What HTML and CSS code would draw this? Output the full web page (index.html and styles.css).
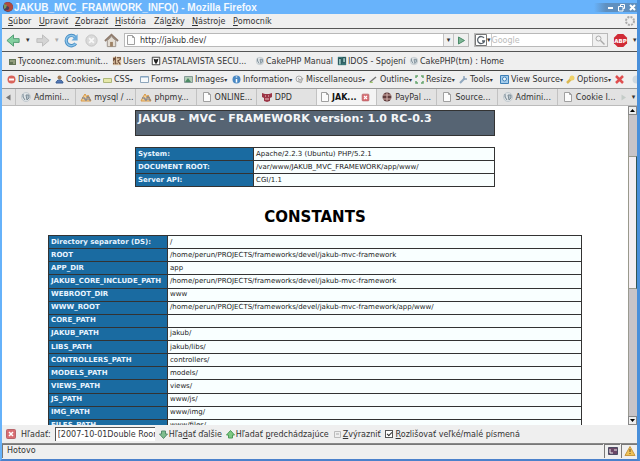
FILE: index.html
```
<!DOCTYPE html>
<html lang="sk">
<head>
    <meta charset="UTF-8">
    <meta name="viewport" content="width=device-width, initial-scale=1.0">
    <title>JAKUB_MVC_FRAMWORK_INFO() - Mozilla Firefox</title>
    <link rel="stylesheet" href="styles.css">
</head>
<body>
    <!-- shared icons -->
    <svg class="sprite" aria-hidden="true">
        <symbol id="page" viewBox="0 0 12 12"><path d="M2.5 1.5h5l2 2v7h-7z" fill="#fcfcfc" stroke="#a0a0a0"/><path d="M7.500 1.500v2h2" fill="none" stroke="#a0a0a0"/></symbol>
        <symbol id="cake" viewBox="0 0 12 12"><circle cx="6" cy="6" r="4.500" fill="#dfe4e7" stroke="#c3cacf"/><path d="M3 3v3l2 3M6 4h3v3l-2 2z" fill="#b5c3cc" stroke="#7b8a94"/></symbol>
        <symbol id="mysql" viewBox="0 0 12 12"><path d="M1 10l2-4 2-3 2 3 1-2 3 6z" fill="#f3cf91" stroke="#d99a48"/><path d="M2 7h3v2h2V6h2v3h2" fill="none" stroke="#6d7792"/></symbol>
        <symbol id="close" viewBox="0 0 12 12"><rect x="1.500" y="1.500" width="9" height="9" rx="1" fill="#d96d72" stroke="#b8646a"/><path d="M4 4l4 4M8 4l-4 4" stroke="#fff" stroke-width="1.500"/></symbol>
    </svg>

    <div class="window">
        <header class="titlebar">
            <svg class="icon" viewBox="0 0 12 12"><circle cx="6" cy="6" r="5" fill="#4d3f58"/><path d="M2 2c4-2 9 0 9 4s-5 6-8 3c3 1 5-1 4-3L5 5z" fill="#b34a3f"/><path d="M2 3l3 1-1 3-2 1z" fill="#7a9a5c"/></svg>
            <h1 class="title">JAKUB_MVC_FRAMWORK_INFO() - Mozilla Firefox</h1>
            <div class="window-buttons">
                <button class="btn" aria-label="Minimalizovať"><svg class="icon-small" viewBox="0 0 9 9"><path d="M2 5h5" stroke="#fff" stroke-width="2"/></svg></button>
                <button class="btn" aria-label="Obnoviť"><svg class="icon-small" viewBox="0 0 9 9"><path d="M3.500 3V1.500h4v4H6M1.500 3.500H6V8H1.500z" fill="none" stroke="#fff"/></svg></button>
                <button class="btn" aria-label="Zavrieť"><svg class="icon-small" viewBox="0 0 9 9"><path d="M2 2l5 5M7 2L2 7" stroke="#fff" stroke-width="2"/></svg></button>
            </div>
        </header>

        <nav class="menubar">
            <button class="btn"><u>S</u>úbor</button>
            <button class="btn"><u>U</u>praviť</button>
            <button class="btn"><u>Z</u>obraziť</button>
            <button class="btn"><u>H</u>istória</button>
            <button class="btn">Zál<u>o</u>žky</button>
            <button class="btn"><u>N</u>ástroje</button>
            <button class="btn"><u>P</u>omocník</button>
            <svg class="icon throbber" viewBox="0 0 12 12"><circle cx="6" cy="6" r="4" fill="none" stroke="#aaa" stroke-width="2" stroke-dasharray="2 1.140"/></svg>
        </nav>

        <div class="navbar">
            <button class="btn" aria-label="Späť"><svg class="icon-large" viewBox="0 0 16 16"><path d="M1 8l7-6v4h6v4H8v4z" fill="#83cfa0" stroke="#4d9a70"/></svg></button>
            <button class="btn arrow" aria-label="História späť">▾</button>
            <button class="btn" aria-label="Dopredu"><svg class="icon-large" viewBox="0 0 16 16"><path d="M15 8L8 2v4H2v4h6v4z" fill="#d4d4d4" stroke="#bcbcbc"/></svg></button>
            <button class="btn arrow faded" aria-label="História dopredu">▾</button>
            <button class="btn" aria-label="Obnoviť stránku"><svg class="icon-large" viewBox="0 0 16 16"><path d="M12.500 11a5.500 5.500 0 1 1-.5-6.500" fill="none" stroke="#4a8fc4" stroke-width="3.500"/><path d="M12.500 11a5.500 5.500 0 1 1-.5-6.500" fill="none" stroke="#8cc4ea" stroke-width="1.500"/><path d="M14.500 1v7H8z" fill="#68aadb"/></svg></button>
            <button class="btn" aria-label="Zastaviť"><svg class="icon-large" viewBox="0 0 16 16"><circle cx="8" cy="8" r="6" fill="#dadada" stroke="#c2c2c2"/><path d="M5.500 5.500l5 5M10.500 5.500l-5 5" stroke="#f8f8f8" stroke-width="2"/></svg></button>
            <button class="btn" aria-label="Domov"><svg class="icon-large" viewBox="0 0 16 16"><path d="M3.500 8v6.500h9V8L8 4z" fill="#e4ddd3" stroke="#999087"/><path d="M1 8.500L8 2l7 6.500" fill="none" stroke="#8f7b6c" stroke-width="2"/><path d="M6.500 9.500h3v5h-3z" fill="#9d8265"/></svg></button>
            <div class="address">
                <svg class="icon"><use href="#page"/></svg>
                <input class="url" type="text" value="http://jakub.dev/" aria-label="Adresa">
                <button class="btn field-btn" aria-label="Zoznam adries">▾</button>
                <button class="btn field-btn go" aria-label="Prejsť"><svg class="icon-small" viewBox="0 0 9 9"><path d="M1.500 1l6 3.500-6 3.500z" fill="#7eb696" stroke="#4b8b69"/></svg></button>
            </div>
            <div class="search">
                <button class="btn engine" aria-label="Vyhľadávač"><svg class="icon" viewBox="0 0 12 12"><path d="M.5.500h11v11H.5z" fill="#fff" stroke="#777"/><path d="M9 4a3.500 3.500 0 1 0 .5 3H7" fill="none" stroke="#56606a" stroke-width="1.300"/></svg>▾</button>
                <input class="query" type="text" placeholder="Google" aria-label="Hľadať na webe">
                <button class="btn field-btn lens" aria-label="Hľadať"><svg class="icon" viewBox="0 0 12 12"><circle cx="4.500" cy="4.500" r="2.500" fill="#f4f4f4" stroke="#aaa"/><path d="M6.500 6.500l4 4" stroke="#aaa" stroke-width="1.500"/></svg></button>
            </div>
            <button class="btn" aria-label="Adblock Plus"><svg class="icon-large" viewBox="0 0 16 16"><path d="M5 1h6l4 4v6l-4 4H5l-4-4V5z" fill="#d02b36"/><text x="8" y="11" class="abp">ABP</text></svg></button>
            <button class="btn arrow" aria-label="Možnosti Adblock">▾</button>
        </div>

        <nav class="bookmarks">
            <a href="#"><svg class="icon-small" viewBox="0 0 9 9"><path d="M1 2h7v6H1z" fill="#647558"/><path d="M2 4h3M6 3v4" stroke="#c1caa6"/></svg>Tycoonez.com:munit...</a>
            <a href="#"><svg class="icon" viewBox="0 0 12 12"><path d="M1 1h10v10H1z" fill="#dfc8a8"/><path d="M2 2v3l2-3v8M6 2h4v2L7 6l3 4M2 8v2M6 8v2" fill="none" stroke="#674431" stroke-width="1.300"/></svg>Users</a>
            <a href="#"><svg class="icon" viewBox="0 0 12 12"><path d="M1.500 1.500h9v9h-9z" fill="#fff" stroke="#222"/><path d="M3 3l2 1h2l2-1-1 4-2 3-2-3z" fill="#222"/></svg>ASTALAVISTA SECU...</a>
            <a href="#"><svg class="icon"><use href="#cake"/></svg>CakePHP Manual</a>
            <a href="#"><svg class="icon" viewBox="0 0 12 12"><path d="M1 1h10v10H1z" fill="#3b7777"/><path d="M2 10V3h3v7M7 8V2h3v6z" fill="#a9d6cf" stroke="#173e47"/></svg>IDOS - Spojení</a>
            <a href="#"><svg class="icon"><use href="#cake"/></svg>CakePHP(tm) : Home</a>
        </nav>

        <div class="devbar">
            <button class="btn"><svg class="icon-small" viewBox="0 0 9 9"><circle cx="4.500" cy="4.500" r="4" fill="#d9645b"/><path d="M2 4.500h5" stroke="#fff" stroke-width="2"/></svg>Disable<i>▾</i></button>
            <button class="btn"><svg class="icon-small" viewBox="0 0 9 9"><circle cx="4.500" cy="2.500" r="2" fill="#a47e5a"/><path d="M1 8c0-4 7-4 7 0z" fill="#5379b8" stroke="#365b91"/></svg>Cookies<i>▾</i></button>
            <button class="btn"><svg class="icon-small" viewBox="0 0 9 9"><path d="M.5 3.500h8v4h-8z" fill="#e6e8a8" stroke="#aeb87b"/></svg>CSS<i>▾</i></button>
            <button class="btn"><svg class="icon-small" viewBox="0 0 9 9"><path d="M.5 1.500h8v6h-8z" fill="#f6f9fb" stroke="#8da5bb"/><path d="M1 2h7" stroke="#7da2c5"/></svg>Forms<i>▾</i></button>
            <button class="btn"><svg class="icon-small" viewBox="0 0 9 9"><path d="M.5 1.500h8v6h-8z" fill="#b5ceb8" stroke="#859a97"/><path d="M1 7l3-4 3 4z" fill="#4b8a65"/></svg>Images<i>▾</i></button>
            <button class="btn"><svg class="icon-small" viewBox="0 0 9 9"><circle cx="4.500" cy="4.500" r="4" fill="#4a88c3"/><path d="M4.500 1.500v1M4.500 4v3.500" stroke="#fff" stroke-width="1.500"/></svg>Information<i>▾</i></button>
            <button class="btn"><svg class="icon-small" viewBox="0 0 9 9"><circle cx="4" cy="4" r="3" fill="#eee" stroke="#aaa"/><path d="M3 3l2 2 3-2-2 5-3-2" fill="#ccc" stroke="#aaa"/></svg>Miscellaneous<i>▾</i></button>
            <button class="btn"><svg class="icon-small" viewBox="0 0 9 9"><path d="M1 7l6-5" stroke="#777" stroke-width="1.500"/><path d="M0 8h4L3 6z" fill="#9bc26c"/></svg>Outline<i>▾</i></button>
            <button class="btn"><svg class="icon-small" viewBox="0 0 9 9"><path d="M1 3V1h2M6 1h2v2M1 6v2h2M6 8h2V6" fill="none" stroke="#65a56e" stroke-width="1.500"/></svg>Resize<i>▾</i></button>
            <button class="btn"><svg class="icon-small" viewBox="0 0 9 9"><path d="M1 8l5-5" stroke="#91a8bf" stroke-width="2"/><path d="M5 1v3h3" fill="none" stroke="#91a8bf" stroke-width="1.500"/></svg>Tools<i>▾</i></button>
            <button class="btn"><svg class="icon-small" viewBox="0 0 9 9"><path d="M.5.500h8v8h-8z" fill="#a4cceb" stroke="#3e7fb7"/><circle cx="4.500" cy="4" r="2" fill="#eef8ff" stroke="#3e7fb7"/></svg>View Source<i>▾</i></button>
            <button class="btn"><svg class="icon-small" viewBox="0 0 9 9"><path d="M1 8l5-5" stroke="#dbb851" stroke-width="2.500"/><circle cx="6" cy="3" r="2.500" fill="#f0d269"/></svg>Options<i>▾</i></button>
            <button class="btn" aria-label="Chyby"><svg class="icon-small" viewBox="0 0 9 9"><path d="M1 1l7 7M8 1L1 8" stroke="#df4f50" stroke-width="2.500"/></svg></button>
            <button class="btn" aria-label="Stav"><svg class="icon-small" viewBox="0 0 9 9"><circle cx="4.500" cy="4.500" r="4" fill="#cfd8df"/></svg></button>
        </div>

        <div class="tabbar">
            <button class="btn arrow" aria-label="Posunúť doľava"><svg class="icon-small" viewBox="0 0 9 9"><path d="M6.500 1.500L2 4.500l4.500 3z" fill="#777"/></svg></button>
            <div class="tabs">
                <button class="btn tab"><svg class="icon"><use href="#cake"/></svg>Admini...</button>
                <button class="btn tab"><svg class="icon"><use href="#mysql"/></svg>mysql / ...</button>
                <button class="btn tab"><svg class="icon"><use href="#mysql"/></svg>phpmy...</button>
                <button class="btn tab"><svg class="icon"><use href="#page"/></svg>ONLINE...</button>
                <button class="btn tab"><svg class="icon" viewBox="0 0 12 12"><path d="M1 2l3 1h4l3-1v4L9 7v3L6 11 3 10V7L1 6z" fill="#9b3546"/><path d="M4 5h1M7 5h1M4 8h4" stroke="#f1c6c8"/></svg>DPD</button>
                <button class="btn tab active"><svg class="icon"><use href="#page"/></svg>JAK...<svg class="icon-small tab-close"><use href="#close"/></svg></button>
                <button class="btn tab"><svg class="icon" viewBox="0 0 12 12"><circle cx="6" cy="6" r="4.500" fill="#603c3c"/><path d="M2 4h8M2 8h8M6 2v8" stroke="#d6b3ae"/></svg>PayPal ...</button>
                <button class="btn tab"><svg class="icon"><use href="#page"/></svg>Source...</button>
                <button class="btn tab"><svg class="icon"><use href="#cake"/></svg>Admini...</button>
                <button class="btn tab"><svg class="icon"><use href="#page"/></svg>Cookie I...</button>
            </div>
            <button class="btn arrow" aria-label="Posunúť doprava"><svg class="icon-small" viewBox="0 0 9 9"><path d="M2.500 1.500L7 4.500l-4.500 3z" fill="#c4ccc8"/></svg></button>
            <button class="btn arrow" aria-label="Zoznam kariet">▾</button>
        </div>

        <div class="viewport">
            <main class="page">
                <h2 class="version">JAKUB - MVC - FRAMEWORK version: 1.0 RC-0.3</h2>
                <table class="info system">
                    <tr><th>System:</th><td>Apache/2.2.3 (Ubuntu) PHP/5.2.1</td></tr>
                    <tr><th>DOCUMENT ROOT:</th><td>/var/www/JAKUB_MVC_FRAMEWORK/app/www/</td></tr>
                    <tr><th>Server API:</th><td>CGI/1.1</td></tr>
                </table>
                <h2 class="heading">CONSTANTS</h2>
                <table class="info constants">
                    <tr><th>Directory separator (DS):</th><td>/</td></tr>
                    <tr><th>ROOT</th><td>/home/perun/PROJECTS/frameworks/devel/jakub-mvc-framework</td></tr>
                    <tr><th>APP_DIR</th><td>app</td></tr>
                    <tr><th>JAKUB_CORE_INCLUDE_PATH</th><td>/home/perun/PROJECTS/frameworks/devel/jakub-mvc-framework</td></tr>
                    <tr><th>WEBROOT_DIR</th><td>www</td></tr>
                    <tr><th>WWW_ROOT</th><td>/home/perun/PROJECTS/frameworks/devel/jakub-mvc-framework/app/www/</td></tr>
                    <tr><th>CORE_PATH</th><td></td></tr>
                    <tr><th>JAKUB_PATH</th><td>jakub/</td></tr>
                    <tr><th>LIBS_PATH</th><td>jakub/libs/</td></tr>
                    <tr><th>CONTROLLERS_PATH</th><td>controllers/</td></tr>
                    <tr><th>MODELS_PATH</th><td>models/</td></tr>
                    <tr><th>VIEWS_PATH</th><td>views/</td></tr>
                    <tr><th>JS_PATH</th><td>www/js/</td></tr>
                    <tr><th>IMG_PATH</th><td>www/img/</td></tr>
                    <tr><th>FILES_PATH</th><td>www/files/</td></tr>
                </table>
            </main>
            <div class="scrollbar">
                <button class="btn scroll-btn" aria-label="Hore"><svg viewBox="0 0 5 5"><path d="M0 4l2.500-3L5 4z"/></svg></button>
                <div class="track before"></div>
                <div class="thumb"></div>
                <div class="track"></div>
                <button class="btn scroll-btn" aria-label="Dole"><svg viewBox="0 0 5 5"><path d="M0 1l2.500 3L5 1z"/></svg></button>
            </div>
        </div>

        <div class="findbar">
            <button class="btn" aria-label="Zavrieť hľadanie"><svg class="icon"><use href="#close"/></svg></button>
            <label for="find">Hľadať:</label>
            <input class="find" id="find" type="text" value="[2007-10-01Double Room">
            <button class="btn"><svg class="icon-small" viewBox="0 0 9 9"><path d="M2.500 1h4v3h2l-4 4.500L.5 4h2z" fill="#7fbd8e" stroke="#548c6f"/></svg><span>Hľa<u>d</u>ať ďalšie</span></button>
            <button class="btn"><svg class="icon-small" viewBox="0 0 9 9"><path d="M2.500 8h4V5h2l-4-4.500L.5 5h2z" fill="#7fc983" stroke="#4c9c59"/></svg><span>Hľadať <u>p</u>redchádzajúce</span></button>
            <button class="btn"><svg class="icon-small" viewBox="0 0 9 9"><path d="M1.500 1.500h6v6h-6z" fill="#eee" stroke="#bbb"/><path d="M3 4h3" stroke="#aaa"/></svg><span><u>Z</u>výrazniť</span></button>
            <label class="case"><input class="check" type="checkbox" checked><span><u>R</u>ozlišovať veľké/malé písmená</span></label>
        </div>

        <footer class="statusbar">
            <span class="status">Hotovo</span>
            <span class="status-icon"><svg class="icon" viewBox="0 0 12 12"><path d="M1.500 2.500h9v7h-9z" fill="#6b4767" stroke="#4c4c64"/><path d="M3 4v4h3M7 5h3" fill="none" stroke="#eee"/></svg></span>
            <span class="status-icon"><svg class="icon" viewBox="0 0 12 12"><path d="M6 1.500l5 9H1z" fill="#efc357" stroke="#c9983f"/><path d="M6 4v3M6 8v1" stroke="#604a22"/></svg></span>
        </footer>
    </div>
</body>
</html>
```

FILE: styles.css
```
* {
    box-sizing: border-box;
}
body {
    margin: 0;
    height: 100vh;
    font-family: "DejaVu Sans", sans-serif;
    font-size: 8px;
    color: #333;
}
.sprite {
    display: none;
}
.window {
    display: flex;
    flex-direction: column;
    height: 100%;
    padding-bottom: 1px;
    border: solid #66b2fa;
    border-width: 0 3px 2px 2px;
    border-right-color: #498fda;
    border-bottom-color: #4b81cb;
    background-color: #efefef;
}
.btn {
    display: flex;
    align-items: center;
    padding: 0;
    border: 0;
    background: none;
    color: inherit;
    font: inherit;
    white-space: nowrap;
}
a {
    display: flex;
    align-items: center;
    gap: 1px;
    color: inherit;
    text-decoration: none;
    white-space: nowrap;
}
input {
    min-width: 0;
    padding: 0;
    border: 0;
    background-color: white;
    color: #333;
    font: inherit;
}
.icon {
    flex: none;
    width: 12px;
    height: 12px;
}
.icon-small {
    flex: none;
    width: 9px;
    height: 9px;
}
.icon-large {
    flex: none;
    width: 15px;
    height: 15px;
}
.titlebar {
    display: flex;
    align-items: center;
    height: 14px;
    background-color: #68b3fb;
}
.title {
    flex: 1;
    margin: 0;
    font: bold 10px "Liberation Sans", sans-serif;
    color: #f4faff;
}
.window-buttons {
    display: flex;
    gap: 2px;
    padding-left: 12px;
    background: linear-gradient(90deg, #68b3fb, #5f8fbf 12px);
}
.menubar {
    display: grid;
    grid-template-columns: 31px 36px 40px 39px 38px 41px 1fr 13px;
    align-items: center;
    height: 15px;
    padding-left: 6px;
    border-bottom: 1px solid #555;
}
.navbar {
    display: flex;
    align-items: center;
    height: 23px;
    gap: 5px;
    padding-left: 4px;
    border-bottom: 1px solid #555;
}
.arrow {
    width: 4px;
    font-size: 7px;
}
.faded {
    color: #aaa;
}
.address,
.search {
    display: flex;
    align-items: center;
    height: 14px;
    border: 1px solid #b9b9b9;
    background-color: white;
}
.address {
    flex: 1;
}
.url {
    flex: 1;
    padding-left: 3px;
}
.field-btn {
    justify-content: center;
    width: 10px;
    height: 12px;
    border-left: 1px solid #c4c4c4;
    background-color: #f0f0f0;
    font-size: 7px;
}
.go,
.lens {
    width: 15px;
}
.search {
    width: 134px;
}
.engine {
    border-right: 1px solid #ccc;
    font-size: 7px;
}
.query {
    flex: 1;
}
.query::placeholder {
    color: #bbb;
}
.abp {
    fill: white;
    font-size: 6px;
    font-weight: bold;
    text-anchor: middle;
}
.bookmarks {
    display: grid;
    grid-template-columns: 104px 39px 104px 82px 72px 1fr;
    align-items: center;
    height: 19px;
    padding-left: 6px;
    border-bottom: 1px solid #444;
}
.bookmarks .icon {
    width: 10px;
    height: 10px;
}
.devbar {
    display: grid;
    grid-template-columns: 48px 48px 37px 44px 48px 63px 74px 46px 44px 41px 66px 49px 17px 1fr;
    align-items: center;
    height: 18px;
    padding-left: 5px;
    overflow: hidden;
    border-bottom: 1px solid #999;
}
.devbar .icon-small {
    margin-right: 2px;
}
.devbar i {
    font-size: 6px;
    font-style: normal;
}
.tabbar {
    display: flex;
    height: 17px;
    border-bottom: 1px solid #bbb;
    background-color: #e2e2e2;
}
.tabbar > .arrow {
    justify-content: center;
    width: 13px;
}
.tabbar > .arrow:last-child {
    width: 7px;
}
.tabs {
    display: grid;
    flex: 1;
    grid-template-columns: repeat(10, 1fr);
}
.tab {
    gap: 2px;
    padding-left: 4px;
    overflow: hidden;
    border-left: 1px solid #c2c2c2;
}
.active {
    gap: 1px;
    padding-left: 2px;
    background-color: #f4f4f4;
    font-weight: bold;
    color: #111;
}
.tab-close {
    margin-left: 4px;
}
.viewport {
    display: flex;
    flex: 1;
    min-height: 0;
    background-color: white;
}
.page {
    flex: 1;
    overflow: hidden;
    padding: 4px 46px 0;
}
.version {
    width: 360px;
    max-width: 100%;
    height: 26px;
    margin: 0 auto 11px;
    padding: 1px 2px;
    border: 1px solid #333;
    background-color: #566473;
    font-size: 11px;
    line-height: 13px;
    color: #f4f6f8;
}
.info {
    border-collapse: collapse;
    margin: 0 auto;
    font-size: 7px;
    line-height: 9px;
    color: #222;
}
.info th,
.info td {
    height: 13px;
    padding: 0 2px;
    border: 1px solid #333;
    text-align: left;
    white-space: nowrap;
}
.info th {
    background-color: #1a6ba1;
    color: #e8f4ff;
}
.info td {
    background-color: #f9ffff;
}
.system {
    width: 360px;
}
.system th {
    width: 118px;
}
.heading {
    margin: 20px 0 8px;
    font-size: 15px;
    line-height: 20px;
    text-align: center;
    color: #000;
}
.constants {
    width: 100%;
    height: 198px;
}
.constants th {
    width: 119px;
}
.scrollbar {
    display: flex;
    flex-direction: column;
    width: 9px;
}
.scroll-btn {
    justify-content: center;
    height: 9px;
    border: 1px solid #888;
    background-color: #eee;
}
.scroll-btn svg {
    width: 5px;
    height: 5px;
}
.track {
    flex: 1;
    border-left: 1px solid #9a9a90;
    background-color: #c8c4c8;
}
.before {
    flex: none;
    height: 41px;
}
.thumb {
    height: 133px;
    border: 1px solid #99998c;
    border-right-color: #355;
    background-color: #f4eef2;
}
.findbar {
    display: flex;
    align-items: center;
    gap: 4px;
    height: 19px;
    padding-left: 3px;
    border-bottom: 1px solid #888;
}
.findbar .icon-small {
    margin-right: 1px;
}
.find {
    width: 100px;
    height: 14px;
    padding-left: 2px;
    border: solid #555;
    border-width: 1px 0 0 1px;
}
.case {
    display: flex;
    align-items: center;
    gap: 3px;
}
.check {
    appearance: none;
    width: 8px;
    height: 8px;
    margin: 0;
    border: 1px solid #555;
}
.check:checked::after {
    content: "";
    display: block;
    width: 4px;
    height: 2px;
    margin: 1px;
    border: solid #333;
    border-width: 0 0 1px 1px;
    transform: rotate(-45deg);
}
.statusbar {
    display: flex;
    height: 14px;
    gap: 1px;
}
.status {
    flex: 1;
    padding-left: 4px;
    border: solid #777;
    border-width: 1px 0 0 1px;
    line-height: 11px;
}
.status-icon {
    display: flex;
    justify-content: center;
    width: 16px;
    border: solid #777;
    border-width: 1px 0 0 1px;
}
```
